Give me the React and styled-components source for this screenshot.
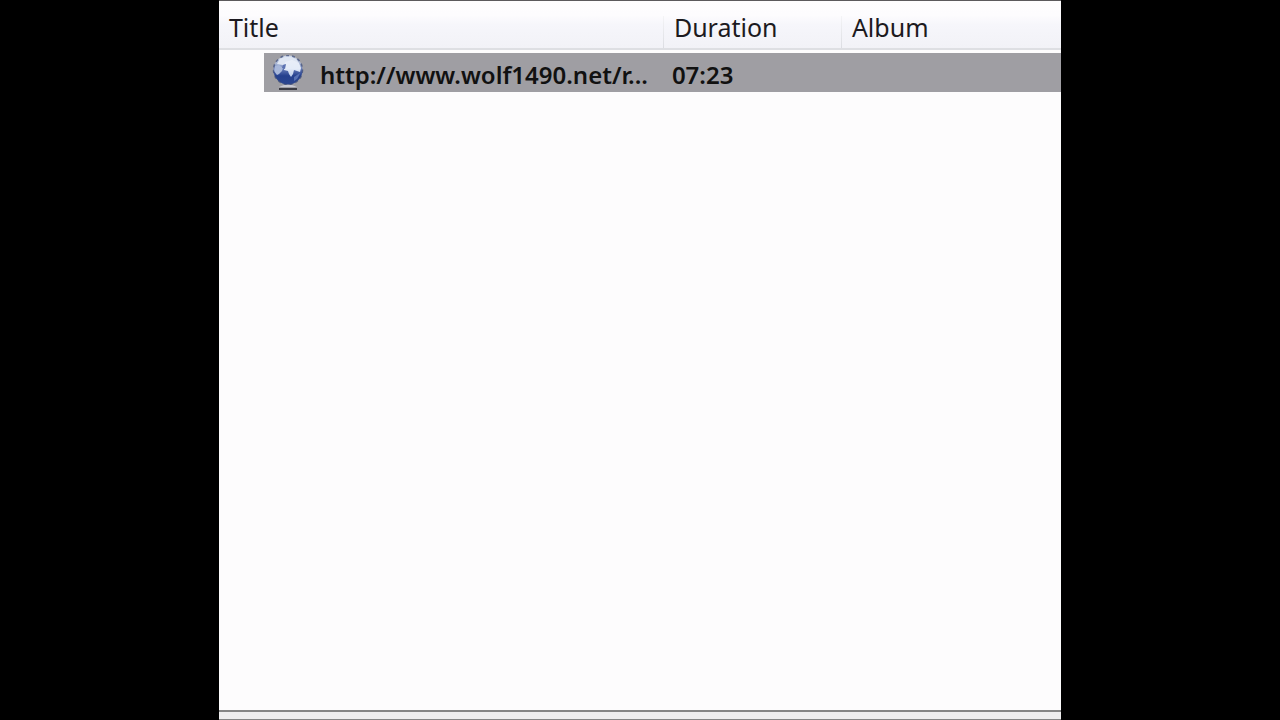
import React from "react";
import styled, { createGlobalStyle } from "styled-components";

const GlobalStyle = createGlobalStyle`
  * { box-sizing: border-box; }
  body {
    margin: 0;
    background: #000;
    color: #111;
    font-family: "Noto Sans", "Open Sans", sans-serif;
  }
`;

const Stage = styled.main`
  display: flex;
  min-height: 100vh;
  padding: 0 17.1%;
`;

const Panel = styled.section`
  flex: 1;
  min-width: 0;
  display: flex;
  flex-direction: column;
  background: #fdfcfd;
  border-top: 1px solid #5c5a5c;
  border-bottom: 1px solid #858585;
`;

const ListArea = styled.div`
  flex: 1;
  overflow: hidden;
`;

const Playlist = styled.table`
  width: 100%;
  table-layout: fixed;
  border-collapse: separate;
  border-spacing: 0;
`;

const Column = styled.col`
  width: ${(p) => p.$width || "auto"};
`;

const HeaderCell = styled.th`
  height: 49px;
  padding: 4px 10px 0;
  text-align: left;
  font-size: 25px;
  line-height: 32px;
  font-weight: 400;
  white-space: nowrap;
  color: #1c1a20;
  border-bottom: 2px solid #dedfe3;
  background:
    ${(p) => p.$divider && "linear-gradient(#f4f4f6, #dcdde2) right 0 bottom 0 / 1px 32px no-repeat,"}
    linear-gradient(#fefdfe 0, #fdfcfe 30%, #f6f6fb 50%, #f2f2f7 100%);
`;

const Spacer = styled.tr`
  height: 3px;
`;

const Cell = styled.td`
  height: 39px;
  padding: ${(p) => (p.$empty ? "0" : "4px 8px 0")};
  background: ${(p) => (p.$empty ? "transparent" : "#9f9ea3")};
  font-size: 24px;
  line-height: 32px;
  font-weight: 600;
  white-space: nowrap;
`;

const Track = styled.div`
  display: flex;
  align-items: center;
  gap: 16px;
  height: 32px;
`;

const Globe = styled.svg`
  flex: none;
  width: 32px;
  height: 36px;
  margin-top: -4px;
`;

const StatusBar = styled.footer`
  height: 9px;
  background: #eeedee;
  border-top: 2px solid #858585;
`;

function GlobeIcon() {
  return (
    <Globe viewBox="0 0 32 36" aria-hidden="true">
      <defs>
        <linearGradient id="sea" x1="0" y1="0" x2="0" y2="1">
          <stop offset="0" stopColor="#d3dcee" />
          <stop offset="0.3" stopColor="#a5b3d4" />
          <stop offset="0.5" stopColor="#5a70b0" />
          <stop offset="0.7" stopColor="#25408e" />
          <stop offset="1" stopColor="#2c468f" />
        </linearGradient>
        <linearGradient id="land" x1="0" y1="0" x2="0" y2="1">
          <stop offset="0" stopColor="#e9eef8" />
          <stop offset="0.5" stopColor="#e4ebf8" />
          <stop offset="1" stopColor="#b9c9e8" />
        </linearGradient>
        <filter id="soften" x="-10%" y="-10%" width="120%" height="120%">
          <feGaussianBlur stdDeviation="0.6" />
        </filter>
      </defs>
      <circle cx="16" cy="15" r="14.5" fill="url(#sea)" />
      <g filter="url(#soften)">
        <path d="M8 3.5Q16 0 24 4L27 8L18 7L11 10L5 9Z" fill="#dfe6f3" />
        <path d="M13 7L20 5L27 8L29 13L28 17L25 16L22 15L21 19L19 22L17 19L16 16L12 15Z" fill="url(#land)" />
        <path d="M3 11L7 10L11 13L10 16L7 19L5 20L2 16Z" fill="#a9b8da" />
        <path d="M11 10L14 9L13 14L10 13Z" fill="#5c72b2" />
        <path d="M22 22L28 18Q27 23 22 26Z" fill="#5670b3" />
      </g>
      <circle cx="16" cy="15" r="14.5" fill="none" stroke="#3a4a78" strokeWidth="1.5" strokeDasharray="3 3" opacity="0.7" />
      <path d="M12 30H20L25 32H7Z" fill="#c9c9d2" />
      <path d="M7 34H25" stroke="#3c3c44" strokeWidth="2" />
    </Globe>
  );
}

export default function App() {
  return (
    <>
      <GlobalStyle />
      <Stage>
        <Panel aria-label="Playlist">
          <ListArea>
            <Playlist>
              <colgroup>
                <Column $width="45px" />
                <Column $width="400px" />
                <Column $width="178px" />
                <Column />
              </colgroup>
              <thead>
                <tr>
                  <HeaderCell scope="col" colSpan={2} $divider>Title</HeaderCell>
                  <HeaderCell scope="col" $divider>Duration</HeaderCell>
                  <HeaderCell scope="col">Album</HeaderCell>
                </tr>
              </thead>
              <tbody>
                <Spacer aria-hidden="true" />
                <tr>
                  <Cell $empty />
                  <Cell>
                    <Track>
                      <GlobeIcon />
                      <span>http://www.wolf1490.net/r...</span>
                    </Track>
                  </Cell>
                  <Cell>07:23</Cell>
                  <Cell />
                </tr>
              </tbody>
            </Playlist>
          </ListArea>
          <StatusBar />
        </Panel>
      </Stage>
    </>
  );
}
